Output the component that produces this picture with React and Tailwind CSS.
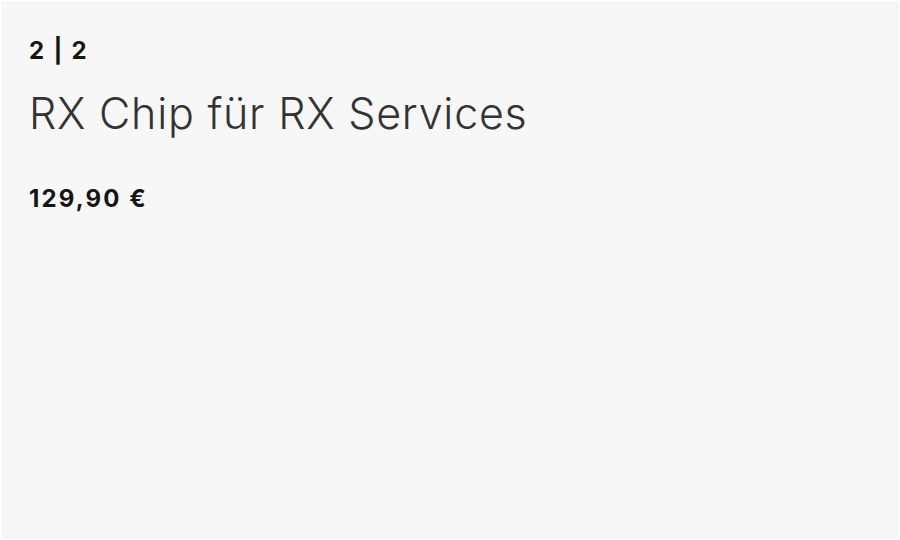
export default function App() {
  return (
    <div className="h-[540px] w-[900px] bg-white p-[2px]">
      <div
        className="h-full w-full border border-[#f0f0f0] bg-[#f7f7f7] pl-[26px] pt-[33px] text-[#151515]"
        style={{ fontFamily: "Inter, 'Noto Sans', sans-serif" }}
      >
        <div className="text-[24px] font-bold leading-[30px] tracking-[1.8px]">2 | 2</div>
        <h1 className="mt-[22px] text-[43px] font-light leading-[50px] tracking-[0.75px] text-[#333]">
          RX Chip für RX Services
        </h1>
        <p className="mt-[46px] text-[24px] font-bold leading-[30px] tracking-[2.1px]">129,90 €</p>
      </div>
    </div>
  );
}
